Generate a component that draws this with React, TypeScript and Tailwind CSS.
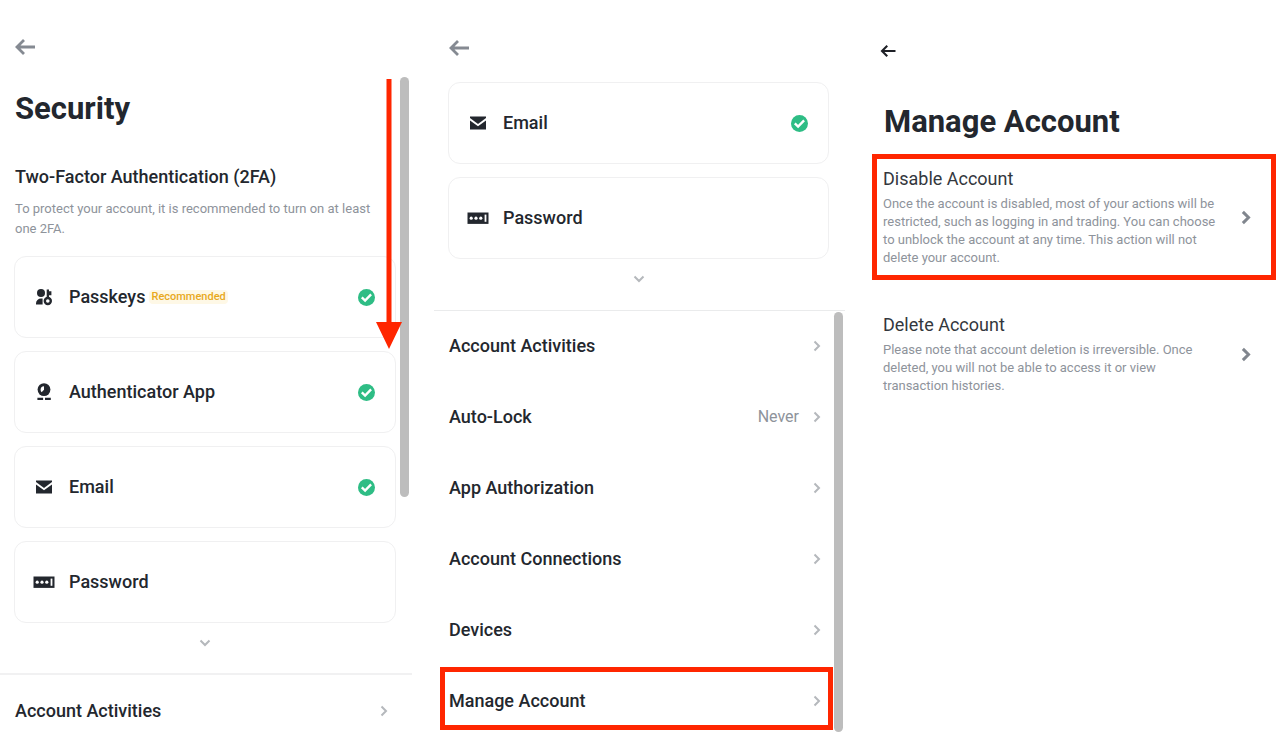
import React from 'react';

interface IconProps {
  className?: string;
}

const BackArrow: React.FC<IconProps> = ({ className }) => (
  <svg viewBox="0 0 20 16" fill="none" stroke="currentColor" strokeWidth="2.8" className={className}>
    <path d="M20 8H2M9 1L2 8l7 7" />
  </svg>
);

const ChevronRight: React.FC<IconProps> = ({ className }) => (
  <svg viewBox="0 0 8 12" fill="none" stroke="currentColor" className={className}>
    <path d="M1.5 1.5L6 6l-4.5 4.5" />
  </svg>
);

const ChevronDown: React.FC<IconProps> = ({ className }) => (
  <svg viewBox="0 0 12 8" fill="none" stroke="currentColor" strokeWidth="2" className={className}>
    <path d="M1.5 1.5L6 6l4.5-4.5" />
  </svg>
);

const CheckBadge = () => (
  <svg viewBox="0 0 17 17" className="w-[17px] h-[17px] shrink-0">
    <circle cx="8.5" cy="8.5" r="8.5" fill="#2ebd85" />
    <path d="M3.8 8.4l3.3 3.2 6-6.2" fill="none" stroke="#fff" strokeWidth="2.4" />
  </svg>
);

const PasskeyIcon = () => (
  <svg viewBox="0 0 22 20" fill="currentColor" className="w-[22px] h-5">
    <circle cx="8" cy="6" r="4" />
    <path d="M3 17.6v-1a5 5 0 0 1 5-5h1.6v6z" />
    <circle cx="14.8" cy="14" r="3" fill="none" stroke="currentColor" strokeWidth="2.4" />
    <path d="M13.7 2.6H16v1.6h2.4v4H16V11h-2.3z" />
  </svg>
);

const AuthenticatorIcon = () => (
  <svg viewBox="0 0 22 20" fill="currentColor" className="w-[22px] h-5">
    <circle cx="11" cy="7.6" r="6.4" />
    <path d="M7.6 8A3.7 3.7 0 0 1 11 4.2v3.6l-2.4 2.5A3.7 3.7 0 0 1 7.6 8z" fill="#fff" />
    <path d="M4.4 15.7h5.7V18H4.4zM12 15.7h5.8V18H12z" />
  </svg>
);

const EmailIcon = () => (
  <svg viewBox="0 0 22 20" fill="currentColor" className="w-[22px] h-5">
    <path d="M3 3.5h16v1.6L11 11 3 5.1z" />
    <path d="M3 7.5l8 5.8 8-5.8v9H3z" />
  </svg>
);

const PasswordIcon = () => (
  <svg viewBox="0 0 22 20" className="w-[22px] h-5">
    <path d="M.5 4.5h21v11.4H.5z" fill="currentColor" />
    <g fill="#fff">
      <circle cx="4.2" cy="10.2" r="1.6" />
      <circle cx="9" cy="10.2" r="1.6" />
      <circle cx="13.8" cy="10.2" r="1.6" />
      <path d="M17.6 6.6h1.8v7.2h-1.8z" />
    </g>
  </svg>
);

interface Method {
  label: string;
  Icon: React.FC;
  enabled: boolean;
  tag?: string;
}

const METHODS: Method[] = [
  { label: 'Passkeys', Icon: PasskeyIcon, enabled: true, tag: 'Recommended' },
  { label: 'Authenticator App', Icon: AuthenticatorIcon, enabled: true },
  { label: 'Email', Icon: EmailIcon, enabled: true },
  { label: 'Password', Icon: PasswordIcon, enabled: false },
];

const SETTINGS = [
  { label: 'Account Activities' },
  { label: 'Auto-Lock', value: 'Never' },
  { label: 'App Authorization' },
  { label: 'Account Connections' },
  { label: 'Devices' },
  { label: 'Manage Account', highlighted: true },
];

const MethodCard: React.FC<{ method: Method }> = ({ method }) => (
  <button className="w-full h-[82px] shrink-0 flex items-center rounded-xl border border-[#f0f0f1] pl-[18px] pr-5 text-left">
    <method.Icon />
    <span className="ml-3.5 text-lg font-medium">{method.label}</span>
    {method.tag && (
      <span className="ml-1 px-0.5 rounded-sm bg-[#fef8e6] text-[11px] leading-[14px] font-medium text-[#e8a820]">
        {method.tag}
      </span>
    )}
    <span className="flex-1" />
    {method.enabled && <CheckBadge />}
  </button>
);

const MoreButton = () => (
  <button aria-label="Show more" className="w-full flex justify-center py-4 pr-0.5">
    <ChevronDown className="w-3 h-2 text-[#b5b8bc]" />
  </button>
);

interface SettingRowProps {
  label: string;
  value?: string;
}

const SettingRow: React.FC<SettingRowProps> = ({ label, value }) => (
  <button className="w-full h-full flex items-center pl-[15px] pr-6 text-left">
    <span className="flex-1 text-lg font-medium">{label}</span>
    {value && <span className="mr-3.5 text-base text-[#8e939b]">{value}</span>}
    <ChevronRight className="w-2 h-3 stroke-2 text-[#b5b8bc]" />
  </button>
);

interface AccountOptionProps {
  title: string;
  text: string;
  highlighted?: boolean;
}

const AccountOption: React.FC<AccountOptionProps> = ({ title, text, highlighted }) => (
  <button
    className={`w-full flex items-center border-[5px] pl-1.5 pr-5 py-2 text-left ${
      highlighted ? 'border-[#ff2600]' : 'border-transparent'
    }`}
  >
    <span className="flex-1 block pr-6">
      <span className="block text-lg leading-6 text-[#33373d]">{title}</span>
      <span className="block mt-1 text-[13px] leading-[18px] text-[#8e939b]">{text}</span>
    </span>
    <ChevronRight className="w-2.5 h-[15px] stroke-[2.4] text-[#81868e]" />
  </button>
);

const App: React.FC = () => (
  <main className="h-screen overflow-hidden grid grid-rows-1 grid-cols-[412fr_411fr_409fr] gap-[22px] pr-1 bg-white font-[Roboto,sans-serif] text-[#23272e]">
    <section className="relative flex flex-col min-w-0">
      <div className="flex flex-col items-start pl-[15px] pr-8 pt-[39px]">
        <button aria-label="Back">
          <BackArrow className="w-5 h-4 text-[#858a92]" />
        </button>
        <h1 className="mt-[34px] text-[31px] leading-10 font-bold">Security</h1>
        <h2 className="mt-9 text-lg leading-6 font-medium whitespace-nowrap">Two-Factor Authentication (2FA)</h2>
        <p className="mt-2.5 text-[13px] leading-5 text-[#8e939b]">
          To protect your account, it is recommended to turn on at least one 2FA.
        </p>
      </div>
      <div className="flex flex-col gap-[13px] mt-[17px] pl-3.5 pr-4">
        {METHODS.map((method) => (
          <MethodCard key={method.label} method={method} />
        ))}
      </div>
      <MoreButton />
      <div className="mt-2.5 h-[73px] shrink-0 border-t-2 border-[#f1f1f2]">
        <SettingRow label="Account Activities" />
      </div>

      <div className="absolute right-[3px] top-[77px] w-[9px] h-[420px] rounded-full bg-[#bdbdbd]" />
      <svg viewBox="0 0 26 270" fill="#ff2600" className="absolute right-2.5 top-[79px] w-[26px] h-[270px]">
        <path d="M10.5 0h5v243H26L13 270 0 243h10.5z" />
      </svg>
    </section>

    <section className="relative flex flex-col min-w-0">
      <div className="flex pl-[15px] pt-10">
        <button aria-label="Back">
          <BackArrow className="w-5 h-4 text-[#858a92]" />
        </button>
      </div>
      <div className="flex flex-col gap-[13px] mt-[26px] pl-3.5 pr-4">
        {METHODS.slice(2).map((method) => (
          <MethodCard key={method.label} method={method} />
        ))}
      </div>
      <MoreButton />
      <ul className="mt-[11px] flex-1 flex flex-col border-t border-[#eaebec]">
        {SETTINGS.map((item) => (
          <li key={item.label} className="relative flex-1">
            <SettingRow label={item.label} value={item.value} />
            {item.highlighted && (
              <span className="absolute left-1.5 right-3 top-0.5 bottom-1.5 border-[5px] border-[#ff2600] pointer-events-none" />
            )}
          </li>
        ))}
      </ul>

      <div className="absolute right-0.5 top-[312px] bottom-1 w-[9px] rounded-full bg-[#bdbdbd]" />
    </section>

    <section className="flex flex-col items-start min-w-0 pl-[5px] pt-[45px]">
      <button aria-label="Back" className="ml-2">
        <BackArrow className="w-4 h-3 text-[#1e2026]" />
      </button>
      <h1 className="mt-[45px] ml-3 text-[31px] leading-10 font-bold">Manage Account</h1>
      <div className="mt-3 w-full flex flex-col gap-5">
        <AccountOption
          title="Disable Account"
          text="Once the account is disabled, most of your actions will be restricted, such as logging in and trading. You can choose to unblock the account at any time. This action will not delete your account."
          highlighted
        />
        <AccountOption
          title="Delete Account"
          text="Please note that account deletion is irreversible. Once deleted, you will not be able to access it or view transaction histories."
        />
      </div>
    </section>
  </main>
);

export default App;
